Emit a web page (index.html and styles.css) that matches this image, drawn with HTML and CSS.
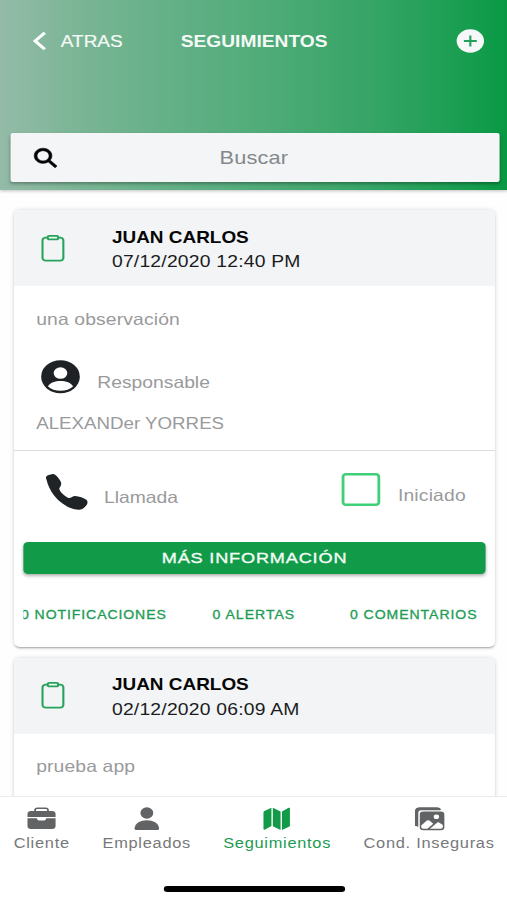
FILE: index.html
```html
<!DOCTYPE html>
<html lang="es">
<head>
<meta charset="utf-8">
<title>Seguimientos</title>
<link rel="stylesheet" href="styles.css">
</head>
<body>
<div class="screen">
  <header class="header">
    <div class="toolbar">
      <a class="back"><svg class="chevron" viewBox="0 0 12 20"><path d="M10.3 1.7 2 10l8.3 8.3"/></svg><span>ATRAS</span></a>
      <h1 class="title">SEGUIMIENTOS</h1>
      <svg class="add" viewBox="0 0 24 24"><circle cx="12" cy="12" r="11.7"/><path d="M12 6.500v11M6.500 12h11"/></svg>
    </div>
    <div class="search">
      <svg class="search-icon" viewBox="0 0 512 512"><path d="M464 428L339.92 303.9a160.48 160.48 0 0030.72-94.58C370.64 120.37 298.27 48 209.32 48S48 120.37 48 209.32s72.37 161.32 161.32 161.32a160.48 160.48 0 0094.58-30.72L428 464zM209.32 319.69a110.38 110.38 0 11110.37-110.37 110.5 110.5 0 01-110.37 110.37z"/></svg>
      <span class="placeholder">Buscar</span>
    </div>
  </header>

  <main class="list">
    <article class="card">
      <div class="card-head">
        <svg class="clipboard" viewBox="0 0 512 512"><path d="M336 64h32a48 48 0 0148 48v320a48 48 0 01-48 48H144a48 48 0 01-48-48V112a48 48 0 0148-48h32"/><rect x="176" y="32" width="160" height="64" rx="26"/></svg>
        <div><h2 class="name">JUAN CARLOS</h2><p class="date">07/12/2020 12:40 PM</p></div>
      </div>
      <div class="details">
        <p class="note">una observación</p>
        <div class="person-row">
          <svg class="avatar" viewBox="-50 -50 100 100"><circle r="49.5" fill="#1f2225"/><circle cy="-11" r="17.5" fill="#fff"/><path d="M-32 29C-22 8 22 8 32 29C18 46-18 46-32 29Z" fill="#fff"/></svg>
          <span class="responsible">Responsable</span>
        </div>
        <p class="owner">ALEXANDer YORRES</p>
      </div>
      <div class="status">
        <svg class="phone" viewBox="15 24 127 108" preserveAspectRatio="none"><path d="M18 42C14 35 16 30 22 28L36 24C41 23 45 27 49 31C55 38 61 45 62 52C63 60 56 64 56 69C60 80 72 90 84 96C92 97 96 90 104 90C116 91 130 96 138 101C143 106 142 112 138 118C132 126 125 131 117 131C100 132 80 124 60 108C40 92 24 68 18 42Z"/></svg>
        <span class="call">Llamada</span>
        <svg class="checkbox" viewBox="0 0 33 33"><rect x="1.200" y="1.200" width="30.600" height="30.600" rx="2.500"/></svg>
        <span class="started">Iniciado</span>
      </div>
      <div class="more">MÁS INFORMACIÓN</div>
      <div class="counters"><span class="notices">0 NOTIFICACIONES</span><span class="alerts">0 ALERTAS</span><span class="comments">0 COMENTARIOS</span></div>
    </article>

    <article class="card">
      <div class="card-head">
        <svg class="clipboard" viewBox="0 0 512 512"><path d="M336 64h32a48 48 0 0148 48v320a48 48 0 01-48 48H144a48 48 0 01-48-48V112a48 48 0 0148-48h32"/><rect x="176" y="32" width="160" height="64" rx="26"/></svg>
        <div><h2 class="name">JUAN CARLOS</h2><p class="date">02/12/2020 06:09 AM</p></div>
      </div>
      <div class="details"><p class="note second">prueba app</p></div>
    </article>
  </main>

  <footer class="footer">
    <nav class="tabs">
      <a class="tab client">
        <svg viewBox="0 0 25 24"><path d="M7 4V3Q7 1.2 9 1.2H16Q18 1.2 18 3V4" fill="none" stroke="currentColor" stroke-width="1.5"/><path d="M3.5 4h18Q24.5 4 24.5 7v3H.5V7Q.5 4 3.5 4ZM.5 11.2H8.5Q8.700 13.500 10.500 13.500H14.500Q16.300 13.500 16.500 11.200H24.500V19Q24.500 22 21.500 22H3.500Q.5 22 .5 19Z"/></svg>
        <span>Cliente</span>
      </a>
      <a class="tab staff">
        <svg viewBox="0 0 25 24"><ellipse cx="12.500" cy="6" rx="5.500" ry="5.800"/><path d="M2 21.500C2.500 16 7 13.300 12.500 13.300S22.500 16 23 21.500Q23 23 21.500 23H3.500Q2 23 2 21.500Z"/></svg>
        <span>Empleados</span>
      </a>
      <a class="tab follow active">
        <svg viewBox="0 0 25 24"><path d="M8 .8V19L2.200 22.700Q1.200 23 1.200 22V5.200Q1.200 4.300 2 3.900ZM9.200.8 15.800 4.500V22.900L9.200 19.200ZM17 4.500 22.700.8Q23.800.4 23.800 1.500V18.500Q23.800 19.300 23 19.700L17 23Z"/></svg>
        <span>Seguimientos</span>
      </a>
      <a class="tab unsafe">
        <svg class="gallery" viewBox="0 0 26 24"><path d="M1.600 19V4Q1.600 1.300 4.500 1.300H20Q21.700 1.300 22.300 2.800" fill="none" stroke="currentColor" stroke-width="1.800"/><path d="M1 5V17Q1 19.300 3.500 19.700V6Q3.500 3.200 6 3.200H22.300Q22 .6 19.500.6H4.500Q1 .6 1 5Z"/><rect x="4.800" y="4.500" width="21" height="18.800" rx="3"/><circle cx="19" cy="9.800" r="2.300" fill="#fff"/><path d="M6 18.500 10.800 13.600Q11.900 12.800 13 13.600L16.300 16.800 11.300 21.700H7.800Q6 21.700 6 19.800ZM13.500 21.700 19.800 15.600Q20.700 15 21.600 15.700L24.500 18V19.800Q24.500 21.700 22.700 21.700Z" fill="#fff"/></svg>
        <span>Cond. Inseguras</span>
      </a>
    </nav>
    <div class="home-bar"></div>
  </footer>
</div>
</body>
</html>
```
FILE: styles.css
```css
* { box-sizing: border-box; }
html, body { margin: 0; height: 100%; overflow: hidden; background: #fff; }
h1, h2, p { margin: 0; font-weight: 400; }
svg { display: block; flex: none; overflow: visible; }

/* The interface uses wide letterforms and icons. */
.screen {
  width: 434px;
  height: 900px;
  display: flex;
  flex-direction: column;
  overflow: hidden;
  transform: scaleX(1.17);
  transform-origin: 0 0;
  background: #fefefe;
  font-family: "Liberation Sans", Arial, sans-serif;
  font-size: 16.5px;
  color: #999a9c;
  white-space: nowrap;
}

.header {
  flex: none;
  height: 190px;
  background: linear-gradient(90deg, #94bba8 0%, #7bb596 15%, #68b18a 30%, #52ac7a 50%, #36a566 73%, #1e9f55 88%, #099944 100%);
  box-shadow: 0 1px 3px rgba(0, 0, 0, .25);
}
.toolbar { display: flex; align-items: center; height: 82px; padding: 0 20px 0 27.5px; color: #f5faf6; }
.back { display: flex; align-items: center; width: 127px; gap: 12.5px; font-size: 16.2px; -webkit-text-stroke: .2px; }
.chevron { width: 12px; height: 20px; fill: none; stroke: #fff; stroke-width: 2.8; }
.title { font-size: 16.4px; font-weight: 700; }
.add { width: 24px; height: 24px; margin-left: auto; fill: #f5f7f8; }
.add path { stroke: #229f58; stroke-width: 1.8; }
.search {
  display: flex;
  align-items: center;
  height: 49px;
  margin: 51px 7.3px 0 9px;
  padding-left: 18.3px;
  border-radius: 2px;
  background: #f3f5f7;
  box-shadow: 0 2px 3px rgba(0, 0, 0, .3);
}
.search-icon { width: 24px; height: 24px; fill: #050505; stroke: #050505; stroke-width: 12; }
.placeholder { margin-left: 136.3px; font-size: 18.6px; letter-spacing: .15px; color: #85878a; }

.list { flex: 1; min-height: 0; overflow: hidden; padding: 20px 10.8px 0 12.4px; }
.card {
  height: 437px;
  margin-bottom: 10.5px;
  border-radius: 5px;
  background: #fff;
  box-shadow: 0 2px 2px -1px rgba(0, 0, 0, .3), 0 0 4px rgba(0, 0, 0, .16);
}
.card-head { display: flex; height: 76px; padding: 0 0 0 18.5px; align-items: center; border-radius: 5px 5px 0 0; background: #f2f4f6; color: #1b1c1e; }
.card-head > div { padding-top: 2px; }
.clipboard { width: 28.5px; height: 28.5px; margin-right: 36.3px; fill: none; stroke: #26a35b; stroke-width: 32; }
.name { height: 24.5px; line-height: 24.5px; font-size: 16.2px; font-weight: 700; color: #060606; }
.date { height: 24.5px; line-height: 24.5px; letter-spacing: .18px; }
.details { padding-left: 18.5px; }
.note { padding-top: 21px; line-height: 24px; letter-spacing: .12px; }
.second { padding-top: 20px; }
.person-row { display: flex; align-items: center; height: 34px; margin-top: 29px; }
.avatar { width: 33.4px; height: 33.4px; margin-left: 3.8px; }
.responsible { margin: 10px 0 0 15px; }
.owner { margin-top: 18px; line-height: 24px; font-size: 16px; }
.status { display: flex; height: 92px; margin-top: 14px; border-top: 1px solid #dcdcdd; }
.phone { width: 36px; height: 36px; margin: 23px 0 0 26.5px; fill: #202326; }
.call { width: 92px; margin: 37px 0 0 14px; }
.checkbox { width: 33px; height: 33px; margin: 22px 0 0 110.7px; fill: none; stroke: #3fcf78; stroke-width: 2.4; }
.started { margin: 35px 0 0 15.5px; letter-spacing: .15px; }
.more {
  height: 32px;
  margin: 0 8.5px 0 8px;
  border-radius: 4px;
  background: #119b48;
  box-shadow: 0 2px 3px rgba(0, 0, 0, .3);
  color: #f3fbf6;
  font-size: 15.5px;
  line-height: 32px;
  letter-spacing: .7px;
  text-align: center;
  -webkit-text-stroke: .35px;
}
.counters { display: flex; height: 30px; margin: 26px 4px 0 8px; overflow: hidden; line-height: 30px; font-size: 12px; letter-spacing: .78px; color: #219c55; -webkit-text-stroke: .3px; }
.notices { margin-left: -2.4px; }
.alerts { margin-left: 39.2px; letter-spacing: .85px; }
.comments { margin-left: 46.8px; letter-spacing: .82px; }

.footer { flex: none; height: 104px; border-top: 1px solid #ececec; background: #fff; }
.tabs { display: flex; height: 58px; padding-left: 11.7px; }
.tab { display: flex; flex-direction: column; align-items: center; padding-top: 10px; font-size: 14px; line-height: 20px; letter-spacing: .62px; color: #77787a; }
.tab svg { width: 25px; height: 24px; margin-bottom: 2px; fill: #626365; color: #626365; }
.tab .gallery { width: 26px; margin-left: 1.5px; }
.staff { margin-left: 28px; }
.follow { margin-left: 27.5px; }
.unsafe { margin-left: 27.7px; }
.tab.active { color: #219b52; }
.tab.active svg { fill: #119b48; }
.home-bar { width: 155px; height: 6px; margin: 31px 0 0 140.3px; border-radius: 3px; background: #000; }
```
